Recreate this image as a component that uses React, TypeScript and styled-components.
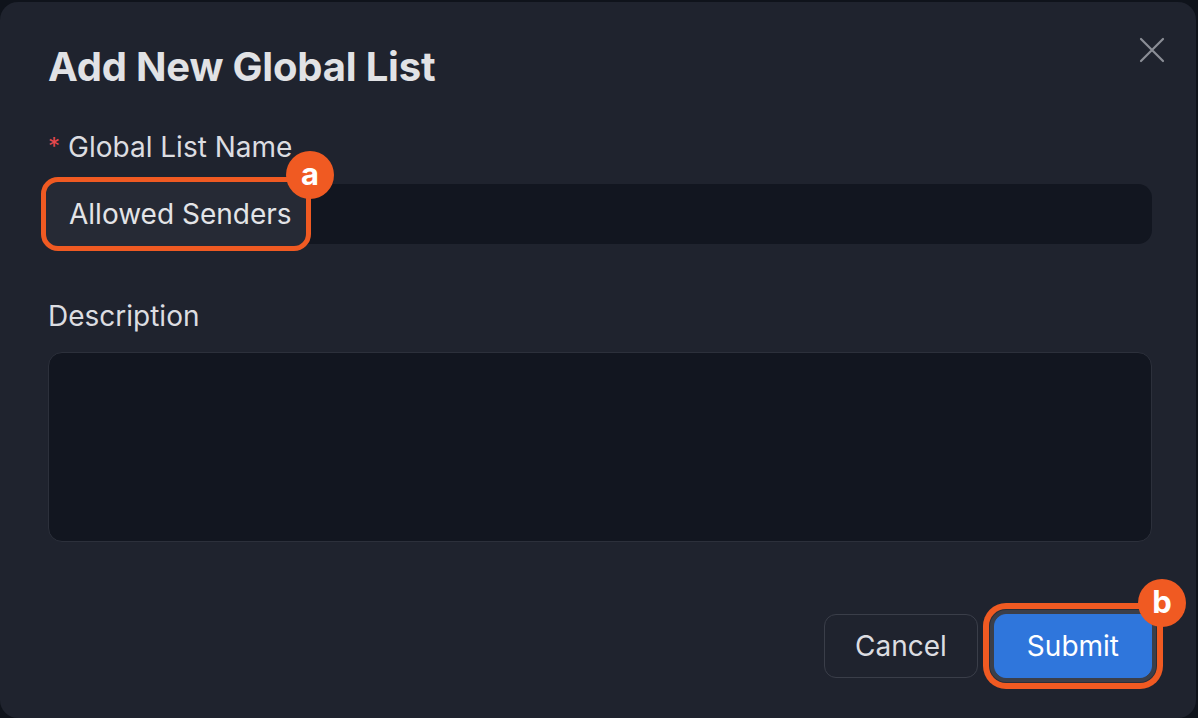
import React, { FC } from "react";
import styled, { createGlobalStyle } from "styled-components";

const GlobalStyle = createGlobalStyle`
  html, body {
    margin: 0;
    padding: 0;
    background: #0f131b;
    font-family: "Inter", "Noto Sans", sans-serif;
  }
  * { box-sizing: border-box; }
`;

const Page = styled.div`
  width: 1198px;
  height: 718px;
  padding-top: 2px;
  overflow: hidden;
`;

const Modal = styled.div`
  width: 1196px;
  height: 716px;
  background: #1f232e;
  border-radius: 18px;
  padding: 42px 44px 40px 48px;
  display: flex;
  flex-direction: column;
`;

const Header = styled.div`
  display: flex;
  justify-content: space-between;
  align-items: flex-start;
`;

const Title = styled.h1`
  margin: 0;
  font-size: 40px;
  line-height: 46px;
  font-weight: 700;
  color: #e1e2e5;
  letter-spacing: -0.2px;
`;

const CloseButton = styled.button`
  background: none;
  border: none;
  padding: 0;
  margin: -10px -16px 0 0;
  width: 32px;
  height: 32px;
  display: flex;
  align-items: center;
  justify-content: center;
  cursor: pointer;
`;

const Field = styled.div<{ $top: number }>`
  display: flex;
  flex-direction: column;
  gap: 20px;
  margin-top: ${(p) => p.$top}px;
`;

const Label = styled.label`
  font-size: 28px;
  line-height: 32px;
  color: #dcdde1;
  display: flex;
  align-items: center;
  span {
    color: #e5484d;
    margin-right: 8px;
    font-size: 24px;
  }
`;

const InputShell = styled.div`
  position: relative;
  height: 60px;
  border-radius: 14px;
  background: #121620;
  margin-top: 1px;
`;

const Highlight = styled.div`
  position: absolute;
  left: -7px;
  top: -7px;
  width: 270px;
  height: 74px;
  border: 5px solid #f05a22;
  border-radius: 17px;
  background: #262a35;
`;

const Badge = styled.div<{ $right: number; $top: number }>`
  position: absolute;
  right: ${(p) => p.$right}px;
  top: ${(p) => p.$top}px;
  width: 48px;
  height: 48px;
  border-radius: 50%;
  background: #f05a22;
  color: #fff;
  font-weight: 700;
  font-size: 31px;
  line-height: 46px;
  text-align: center;
  z-index: 3;
`;

const TextInput = styled.input`
  position: relative;
  z-index: 1;
  width: 100%;
  height: 100%;
  background: transparent;
  border: none;
  outline: none;
  padding: 0 21px;
  font-family: inherit;
  font-size: 28px;
  color: #e3e4e7;
`;

const TextArea = styled.textarea`
  height: 190px;
  background: #121620;
  border: 1px solid #2c303b;
  border-radius: 14px;
  resize: none;
  outline: none;
  font-family: inherit;
  font-size: 28px;
  color: #e3e4e7;
  padding: 14px 22px;
`;

const Footer = styled.div`
  margin-top: auto;
  display: flex;
  justify-content: flex-end;
  gap: 16px;
`;

const Button = styled.button<{ $primary?: boolean }>`
  position: relative;
  height: 64px;
  border-radius: 12px;
  font-family: inherit;
  font-size: 28px;
  cursor: pointer;
  padding: 0 ${(p) => (p.$primary ? 32 : 30)}px;
  color: ${(p) => (p.$primary ? "#ffffff" : "#dcdde1")};
  background: ${(p) => (p.$primary ? "#2f76dc" : "transparent")};
  border: 1px solid ${(p) => (p.$primary ? "#2f76dc" : "#3a3e49")};
  box-shadow: ${(p) =>
    p.$primary
      ? "0 0 0 4px #3b3f4a, 0 0 0 5px #2a2e38, 0 0 0 11px #f05a22"
      : "none"};
`;

const CloseIcon: FC = () => (
  <svg width="26" height="26" viewBox="0 0 26 26" fill="none">
    <path
      d="M2 2 L24 24 M24 2 L2 24"
      stroke="#8b8e96"
      strokeWidth="2.2"
      strokeLinecap="round"
    />
  </svg>
);

const App: FC = () => {
  return (
    <>
      <GlobalStyle />
      <Page>
        <Modal>
          <Header>
            <Title>Add New Global List</Title>
            <CloseButton aria-label="Close">
              <CloseIcon />
            </CloseButton>
          </Header>

          <Field $top={41}>
            <Label>
              <span>*</span>Global List Name
            </Label>
            <InputShell>
              <Highlight>
                <Badge $right={-28} $top={-31}>a</Badge>
              </Highlight>
              <TextInput readOnly value="Allowed Senders" />
            </InputShell>
          </Field>

          <Field $top={56}>
            <Label>Description</Label>
            <TextArea readOnly />
          </Field>

          <Footer>
            <Button>Cancel</Button>
            <Button $primary>
              Submit
              <Badge $right={-35} $top={-36}>b</Badge>
            </Button>
          </Footer>
        </Modal>
      </Page>
    </>
  );
};

export default App;
